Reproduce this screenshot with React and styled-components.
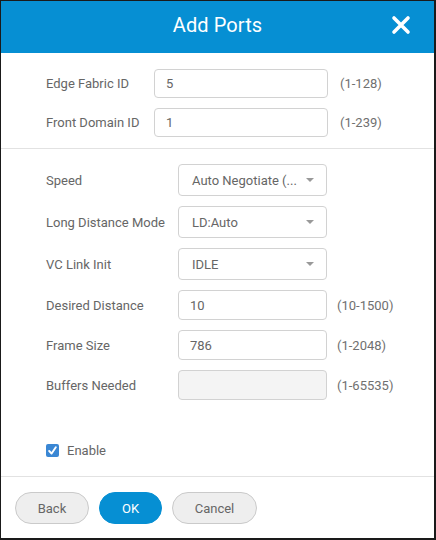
import React from 'react'
import styled, { createGlobalStyle } from 'styled-components'

const GlobalStyle = createGlobalStyle`
  html, body {
    margin: 0;
    padding: 0;
    background: #fff;
    font-family: Roboto, "Liberation Sans", Arial, sans-serif;
  }
  * { box-sizing: border-box; }
`

const BLUE = '#068fd3'

const topFields = [
  { label: 'Edge Fabric ID', value: '5', range: '(1-128)' },
  { label: 'Front Domain ID', value: '1', range: '(1-239)' },
]

const selects = [
  { label: 'Speed', value: 'Auto Negotiate (...' },
  { label: 'Long Distance Mode', value: 'LD:Auto' },
  { label: 'VC Link Init', value: 'IDLE' },
]

const numFields = [
  { label: 'Desired Distance', value: '10', range: '(10-1500)' },
  { label: 'Frame Size', value: '786', range: '(1-2048)' },
  { label: 'Buffers Needed', value: '', range: '(1-65535)', disabled: true },
]

function App() {
  return (
    <>
      <GlobalStyle />
      <Dialog>
        <Header>
          <Title>Add Ports</Title>
          <Close aria-label="close">
            <svg width="20" height="20" viewBox="0 0 20 20">
              <path d="M3 3 L17 17 M17 3 L3 17" stroke="#fff" strokeWidth="3.6" strokeLinecap="round" />
            </svg>
          </Close>
        </Header>

        <Section $top={16} $bottom={11}>
          <Grid $label={108} $field={174}>
            {topFields.map((f) => (
              <React.Fragment key={f.label}>
                <Label>{f.label}</Label>
                <TextInput defaultValue={f.value} $h={29} />
                <Range $gap={12}>{f.range}</Range>
              </React.Fragment>
            ))}
          </Grid>
        </Section>

        <Section $top={15} $bottom={0} $grow>
          <Grid $label={132} $field={149}>
            {selects.map((s) => (
              <React.Fragment key={s.label}>
                <Label>{s.label}</Label>
                <Select>
                  <span>{s.value}</span>
                  <Caret />
                </Select>
                <span />
              </React.Fragment>
            ))}
            {numFields.map((f) => (
              <React.Fragment key={f.label}>
                <Label>{f.label}</Label>
                <TextInput defaultValue={f.value} disabled={f.disabled} $h={30} />
                <Range $gap={10}>{f.range}</Range>
              </React.Fragment>
            ))}
          </Grid>
          <CheckRow>
            <Check>
              <svg width="9" height="9" viewBox="0 0 9 9">
                <path d="M1.2 5 L3.6 7.6 L7.8 1.2" stroke="#fff" strokeWidth="1.9" fill="none" strokeLinecap="round" strokeLinejoin="round" />
              </svg>
            </Check>
            <CheckLabel>Enable</CheckLabel>
          </CheckRow>
        </Section>

        <Footer>
          <Button $w={74}>Back</Button>
          <Button $w={63} $primary>OK</Button>
          <Button $w={85}>Cancel</Button>
        </Footer>
      </Dialog>
    </>
  )
}

export default App

const Dialog = styled.div`
  width: 436px;
  height: 540px;
  border-style: solid;
  border-color: #1a1a1a;
  border-width: 1px 2px 2px 1px;
  background: #fff;
  display: flex;
  flex-direction: column;
  overflow: hidden;
`

const Header = styled.div`
  position: relative;
  height: 52px;
  flex: none;
  background: ${BLUE};
  display: flex;
  align-items: center;
  justify-content: center;
  padding-bottom: 4px;
`

const Title = styled.h1`
  margin: 0;
  color: #fff;
  font-size: 20px;
  font-weight: 400;
  letter-spacing: 0.1px;
`

const Close = styled.button`
  position: absolute;
  right: 23px;
  top: 14px;
  width: 20px;
  height: 20px;
  padding: 0;
  border: 0;
  background: none;
  display: flex;
  cursor: pointer;
`

const Section = styled.div`
  padding: ${(p) => p.$top}px 0 ${(p) => p.$bottom}px 45px;
  border-bottom: 1px solid #e2e2e2;
  flex: ${(p) => (p.$grow ? '1' : 'none')};
  display: flex;
  flex-direction: column;
`

const Grid = styled.div`
  display: grid;
  grid-template-columns: ${(p) => p.$label}px ${(p) => p.$field}px auto;
  row-gap: 10px;
  align-items: center;
`

const Label = styled.label`
  font-size: 13px;
  color: #666;
`

const Range = styled.span`
  font-size: 13px;
  color: #707070;
  padding-left: ${(p) => p.$gap}px;
`

const TextInput = styled.input`
  height: ${(p) => p.$h}px;
  width: 100%;
  border: 1px solid #d2d2d2;
  border-radius: 4px;
  padding: 0 11px;
  font-family: inherit;
  font-size: 13px;
  color: #666;
  background: #fff;
  outline: none;

  &:disabled {
    background: #f4f4f4;
  }
`

const Select = styled.div`
  height: 32px;
  border: 1px solid #d2d2d2;
  border-radius: 4px;
  padding: 0 12px 0 13px;
  display: flex;
  align-items: center;
  justify-content: space-between;
  font-size: 13px;
  color: #666;
  background: #fff;
`

const Caret = styled.span`
  width: 0;
  height: 0;
  border-left: 4px solid transparent;
  border-right: 4px solid transparent;
  border-top: 4px solid #999;
`

const CheckRow = styled.div`
  display: flex;
  align-items: center;
  gap: 8px;
  margin-top: 43px;
`

const Check = styled.span`
  width: 13px;
  height: 13px;
  border-radius: 2px;
  background: #3a87d4;
  display: flex;
  align-items: center;
  justify-content: center;
`

const CheckLabel = styled.span`
  font-size: 13px;
  color: #666;
`

const Footer = styled.div`
  flex: none;
  height: 61px;
  padding: 15px 0 0 14px;
  display: flex;
  gap: 10px;
`

const Button = styled.button`
  width: ${(p) => p.$w}px;
  height: 32px;
  border-radius: 16px;
  border: 1px solid ${(p) => (p.$primary ? BLUE : '#cacaca')};
  background: ${(p) => (p.$primary ? BLUE : '#eeeeee')};
  color: ${(p) => (p.$primary ? '#fff' : '#666')};
  font-family: inherit;
  font-size: 13px;
  padding: 0;
  cursor: pointer;
`
